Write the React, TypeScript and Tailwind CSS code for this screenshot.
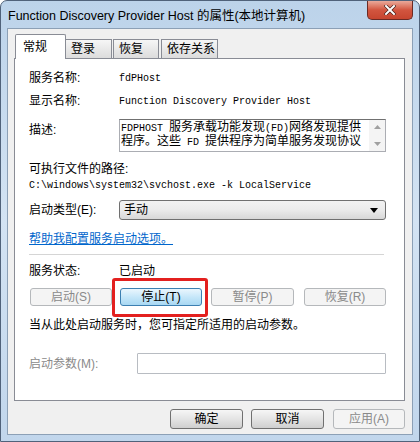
import React from 'react'

const cjk = { fontFamily: '"Liberation Sans", "Noto Sans CJK SC", sans-serif' }
const mono = { fontFamily: '"Liberation Mono", "Noto Sans CJK SC", monospace' }

function Btn({ label, disabled, focused, className = '' }: { label: string; disabled?: boolean; focused?: boolean; className?: string }) {
  let look = 'border-[#707070] bg-gradient-to-b from-[#f6f6f6] via-[#e4e4e4] to-[#cfcfcf] text-black'
  if (disabled) look = 'border-[#b5b8bb] bg-[#f4f4f4] text-[#8a8a8a]'
  if (focused) look = 'border-[#3c7fb1] bg-gradient-to-b from-[#eaf6fd] via-[#c6e7f9] to-[#a8d8f3] text-black'
  return (
    <div className={`h-full flex items-center justify-center rounded-[3px] border text-[12px] ${look} ${className}`}>
      {label}
    </div>
  )
}

// latin bits of the description are narrower than the CJK ones
const M = ({ children }: { children: React.ReactNode }) => (
  <span className="text-[10px]" style={mono}>{children}</span>
)

export default function App() {
  return (
    <div className="w-[420px] h-[442px] overflow-hidden" style={cjk}>
      <div className="w-[420px] h-[442px] flex flex-col rounded-t-[7px] border border-[#50627a] bg-gradient-to-b from-[#bcd3ea] via-[#d3e3f3] to-[#c1d6ec]">
        {/* title bar */}
        <div className="h-[27px] flex items-start shrink-0">
          <div className="pl-[7px] pt-[7px] text-[12.5px] text-black leading-[16px]">
            Function Discovery Provider Host 的属性(本地计算机)
          </div>
          <div className="ml-auto mr-[6px] w-[46px] h-[19px] rounded-b-[5px] border border-t-0 border-[#6b2a24] bg-gradient-to-b from-[#e9a99a] via-[#d2553f] to-[#c7452f] flex items-center justify-center">
            <svg width="12" height="10" viewBox="0 0 12 10">
              <path d="M2 1 L10 9 M10 1 L2 9" stroke="#3b1a14" strokeWidth="3.2" strokeLinecap="square" />
              <path d="M2 1 L10 9 M10 1 L2 9" stroke="#ffffff" strokeWidth="2" strokeLinecap="square" />
            </svg>
          </div>
        </div>

        {/* client area */}
        <div className="mx-[6px] mb-[6px] flex-1 bg-[#f0f0f0] border border-[#8ca0b6] flex flex-col px-[6px]">
          {/* tabs */}
          <div className="flex items-end h-[29px] pl-[1px] relative z-10">
            <div className="w-[51px] h-[25px] bg-white border border-b-0 border-[#898c95] rounded-t-[2px] pl-[7px] pt-[3px] text-[12px] -mb-[1px]">
              常规
            </div>
            <div className="w-[46px] h-[19px] border border-b-0 border-l-0 border-[#898c95] bg-gradient-to-b from-[#f6f6f6] to-[#dcdcdc] pl-[5px] text-[12px] leading-[19px]">
              登录
            </div>
            <div className="ml-[1px] w-[46px] h-[19px] border border-b-0 border-[#898c95] bg-gradient-to-b from-[#f6f6f6] to-[#dcdcdc] pl-[5px] text-[12px] leading-[19px]">
              恢复
            </div>
            <div className="ml-[2px] w-[57px] h-[19px] border border-b-0 border-[#898c95] bg-gradient-to-b from-[#f6f6f6] to-[#dcdcdc] pl-[5px] text-[12px] leading-[19px]">
              依存关系
            </div>
          </div>

          {/* panel */}
          <div className="w-[391px] h-[343px] bg-white border border-[#898c95] flex flex-col pl-[14px] pr-[18px] text-[12px] text-black">
            <div className="mt-[8px] h-[22px] flex items-center">
              <div className="w-[90px]">服务名称:</div>
              <div className="text-[10px]" style={mono}>fdPHost</div>
            </div>
            <div className="mt-[1px] h-[22px] flex items-center">
              <div className="w-[90px]">显示名称:</div>
              <div className="text-[10px]" style={mono}>Function Discovery Provider Host</div>
            </div>
            <div className="mt-[7px] h-[33px] flex">
              <div className="w-[90px] pt-[2px]">描述:</div>
              <div className="flex-1 flex border border-[#abadb3] border-t-[#707070]">
                <div className="flex-1 pl-[1px] pt-[1px] text-[12px] leading-[13px] whitespace-nowrap overflow-hidden">
                  <div><M>FDPHOST </M>服务承载功能发现<M>(FD)</M>网络发现提供</div>
                  <div>程序。这些<M> FD </M>提供程序为简单服务发现协议</div>
                </div>
                <div className="w-[16px] bg-[#f4f4f4] flex flex-col items-center justify-between py-[5px]">
                  <svg width="7" height="4" viewBox="0 0 7 4"><path d="M3.5 0 L7 4 L0 4 Z" fill="#a0a0a0" /></svg>
                  <svg width="7" height="4" viewBox="0 0 7 4"><path d="M0 0 L7 0 L3.5 4 Z" fill="#a0a0a0" /></svg>
                </div>
              </div>
            </div>
            <div className="mt-[9px] h-[16px] flex items-center">可执行文件的路径:</div>
            <div className="h-[16px] flex items-center text-[10px]" style={mono}>
              C:\windows\system32\svchost.exe -k LocalService
            </div>
            <div className="mt-[7px] h-[20px] flex items-center">
              <div className="w-[90px]">启动类型(E):</div>
              <div className="flex-1 h-full flex items-center rounded-[3px] border border-[#707070] bg-gradient-to-b from-[#f2f2f2] via-[#ebebeb] to-[#d8d8d8] pl-[4px] pr-[7px]">
                <span>手动</span>
                <svg className="ml-auto" width="8" height="5" viewBox="0 0 8 5"><path d="M0 0 L8 0 L4 5 Z" fill="#000" /></svg>
              </div>
            </div>
            <div className="mt-[11px] h-[16px] flex items-center">
              <span className="text-[#0066cc] underline">帮助我配置服务启动选项。</span>
            </div>
            <div className="mt-[7px] h-[1px] bg-[#d5d5d5] mr-[2px]" />
            <div className="mt-[8px] h-[16px] flex items-center">
              <div className="w-[90px]">服务状态:</div>
              <div>已启动</div>
            </div>
            <div className="mt-[9px] h-[18px] flex">
              <Btn label="启动(S)" disabled className="w-[82px] ml-[1px]" />
              <div className="relative w-[82px] h-full ml-[8px]">
                <Btn label="停止(T)" focused className="w-full" />
                <div className="absolute -left-[8px] -right-[6px] -top-[10px] -bottom-[11px] border-[3px] border-[#e3201f] rounded-[3px]" />
              </div>
              <Btn label="暂停(P)" disabled className="w-[83px] ml-[9px]" />
              <Btn label="恢复(R)" disabled className="w-[82px] ml-[10px]" />
            </div>
            <div className="mt-[11px] h-[16px] flex items-center">当从此处启动服务时，您可指定所适用的启动参数。</div>
            <div className="mt-[20px] h-[21px] flex items-center">
              <div className="w-[108px] text-[#8a8a8a]">启动参数(M):</div>
              <div className="flex-1 h-full border border-[#b8bcc2] bg-white rounded-[1px]" />
            </div>
          </div>

          {/* dialog buttons */}
          <div className="mt-[8px] h-[20px] flex justify-end w-[391px]">
            <Btn label="确定" className="w-[73px]" />
            <Btn label="取消" className="w-[73px] ml-[8px]" />
            <Btn label="应用(A)" disabled className="w-[72px] ml-[9px]" />
          </div>
        </div>
      </div>
    </div>
  )
}
